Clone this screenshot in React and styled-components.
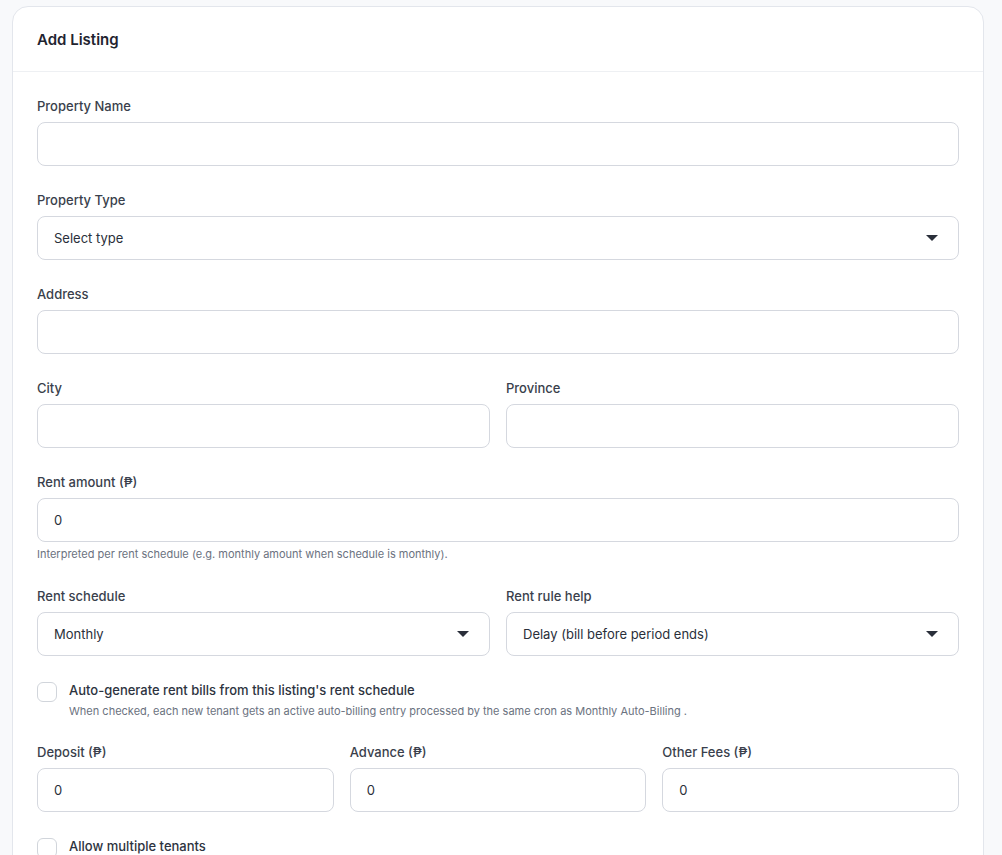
import React from 'react';
import styled, { createGlobalStyle } from 'styled-components';

const Global = createGlobalStyle`
  html, body {
    margin: 0;
    background: #f8f9fb;
    font-family: Inter, "Noto Sans", sans-serif;
    color: #2d3340;
  }
`;

const Page = styled.div`
  padding: 6px 18px 0 12px;
`;

const Card = styled.div`
  background: #fff;
  border: 1px solid #e3e6ec;
  border-radius: 16px;
  overflow: hidden;
`;

const Header = styled.div`
  height: 64px;
  padding: 0 24px;
  display: flex;
  align-items: center;
  border-bottom: 1px solid #eef0f3;
`;

const Title = styled.h2`
  margin: 0;
  font-size: 15px;
  font-weight: 600;
  color: #1f2430;
`;

const Body = styled.div`
  padding: 25px 24px 40px;
  display: flex;
  flex-direction: column;
  gap: 25px;
`;

const Row = styled.div`
  display: grid;
  grid-template-columns: repeat(${p => p.cols || 1}, 1fr);
  gap: 16px;
`;

const Field = styled.div`
  display: flex;
  flex-direction: column;
`;

const Label = styled.label`
  font-size: 13px;
  font-weight: 500;
  line-height: 18px;
  color: #3a3f4c;
  margin-bottom: 7px;
`;

const Input = styled.input`
  box-sizing: border-box;
  height: 44px;
  width: 100%;
  border: 1px solid #d5d8df;
  border-radius: 8px;
  padding: 0 16px;
  font-family: inherit;
  font-size: 13px;
  color: #2a2f3a;
  background: #fff;
  outline: none;
`;

const SelectWrap = styled.div`
  position: relative;
`;

const Select = styled.select`
  box-sizing: border-box;
  height: 44px;
  width: 100%;
  border: 1px solid #d5d8df;
  border-radius: 8px;
  padding: 0 40px 0 16px;
  font-family: inherit;
  font-size: 13px;
  color: #2a2f3a;
  background: #fff;
  appearance: none;
  outline: none;
`;

const Caret = styled.span`
  position: absolute;
  right: 21px;
  top: 19px;
  width: 0;
  height: 0;
  border-left: 6px solid transparent;
  border-right: 6px solid transparent;
  border-top: 6px solid #2a2f3a;
  pointer-events: none;
`;

const Hint = styled.div`
  font-size: 11px;
  line-height: 14px;
  color: #6b7280;
  margin-top: 5px;
  margin-bottom: 1px;
`;

const CheckRow = styled.label`
  display: flex;
  align-items: flex-start;
  gap: 12px;
`;

const Box = styled.span`
  flex: none;
  box-sizing: border-box;
  width: 20px;
  height: 20px;
  margin-top: 1px;
  border: 1px solid #d1d5db;
  border-radius: 6px;
  background: #fff;
`;

const CheckText = styled.div`
  display: flex;
  flex-direction: column;
`;

const CheckTitle = styled.span`
  font-size: 13px;
  font-weight: 500;
  line-height: 18px;
  color: #2d3340;
`;

const CheckHint = styled.span`
  font-size: 11px;
  line-height: 14px;
  color: #6b7280;
  margin-top: 5px;
`;

function TextField({ label, value, hint }) {
  return (
    <Field>
      <Label>{label}</Label>
      <Input defaultValue={value} />
      {hint && <Hint>{hint}</Hint>}
    </Field>
  );
}

function SelectField({ label, value }) {
  return (
    <Field>
      <Label>{label}</Label>
      <SelectWrap>
        <Select defaultValue={value}>
          <option>{value}</option>
        </Select>
        <Caret />
      </SelectWrap>
    </Field>
  );
}

function Check({ title, hint }) {
  return (
    <CheckRow>
      <Box />
      <CheckText>
        <CheckTitle>{title}</CheckTitle>
        {hint && <CheckHint>{hint}</CheckHint>}
      </CheckText>
    </CheckRow>
  );
}

export default function App() {
  return (
    <Page>
      <Global />
      <Card>
        <Header>
          <Title>Add Listing</Title>
        </Header>
        <Body>
          <TextField label="Property Name" />
          <SelectField label="Property Type" value="Select type" />
          <TextField label="Address" />
          <Row cols={2}>
            <TextField label="City" />
            <TextField label="Province" />
          </Row>
          <TextField
            label="Rent amount (₱)"
            value="0"
            hint="Interpreted per rent schedule (e.g. monthly amount when schedule is monthly)."
          />
          <Row cols={2}>
            <SelectField label="Rent schedule" value="Monthly" />
            <SelectField label="Rent rule help" value="Delay (bill before period ends)" />
          </Row>
          <Check
            title="Auto-generate rent bills from this listing's rent schedule"
            hint="When checked, each new tenant gets an active auto-billing entry processed by the same cron as Monthly Auto-Billing ."
          />
          <Row cols={3}>
            <TextField label="Deposit (₱)" value="0" />
            <TextField label="Advance (₱)" value="0" />
            <TextField label="Other Fees (₱)" value="0" />
          </Row>
          <Check title="Allow multiple tenants" />
        </Body>
      </Card>
    </Page>
  );
}
